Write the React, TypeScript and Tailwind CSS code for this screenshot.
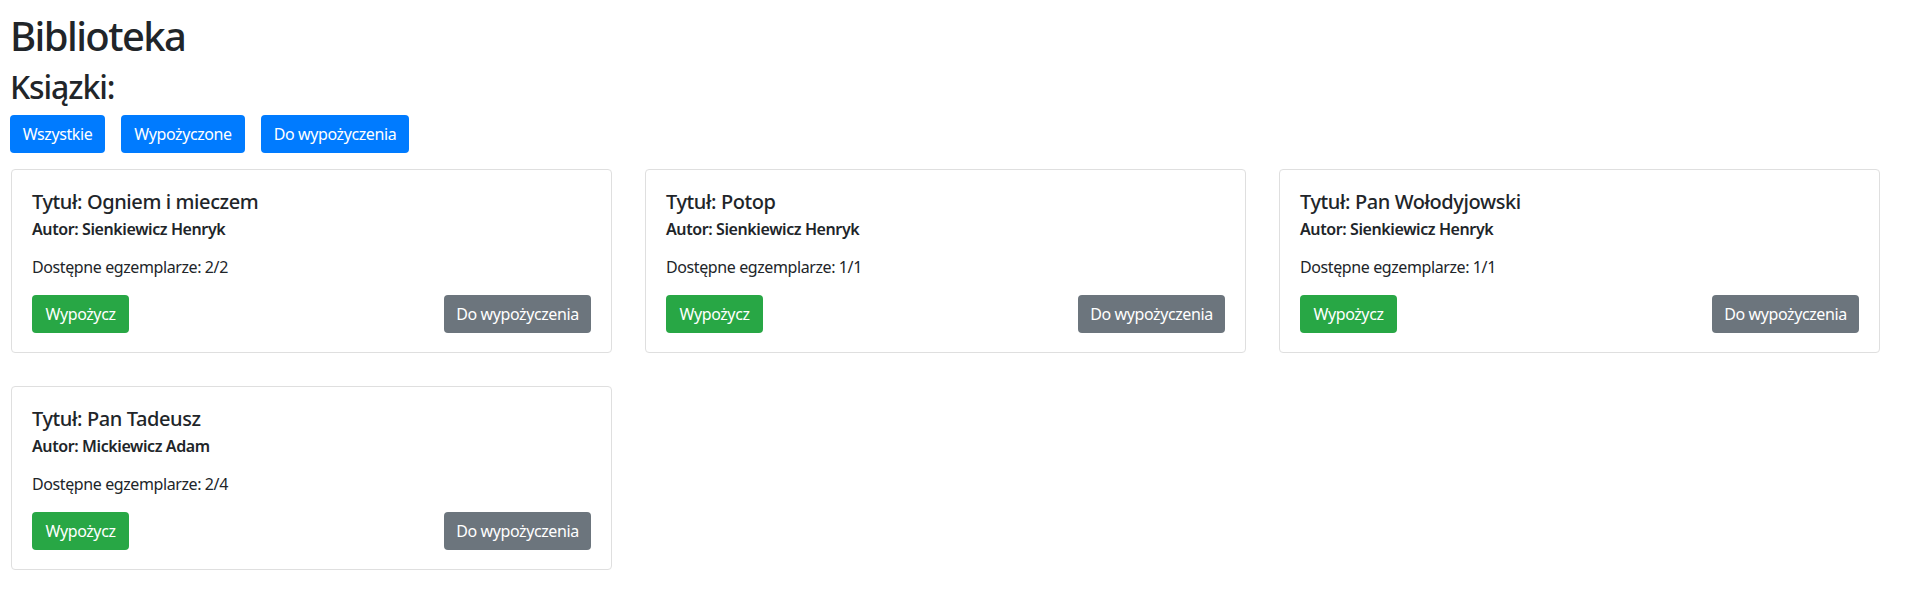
import React from "react";

type Book = { title: string; author: string; avail: string };

const books: Book[] = [
  { title: "Ogniem i mieczem", author: "Sienkiewicz Henryk", avail: "2/2" },
  { title: "Potop", author: "Sienkiewicz Henryk", avail: "1/1" },
  { title: "Pan Wołodyjowski", author: "Sienkiewicz Henryk", avail: "1/1" },
  { title: "Pan Tadeusz", author: "Mickiewicz Adam", avail: "2/4" },
];

function Card({ b }: { b: Book }) {
  return (
    <div className="h-[184px] rounded-[4px] border border-[#dfdfdf] bg-white px-[20px] pt-[20px]">
      <h5 className="mb-[6px] text-[20px] leading-[24px] font-medium">Tytuł: {b.title}</h5>
      <h6 className="mb-[16px] text-[16px] leading-[19px] font-semibold">Autor: {b.author}</h6>
      <p className="mb-[16px] text-[16px] leading-[24px]">Dostępne egzemplarze: {b.avail}</p>
      <div className="flex items-center justify-between">
        <button className="h-[38px] w-[97px] whitespace-nowrap rounded-[4px] bg-[#28a745] text-[16px] text-white">
          Wypożycz
        </button>
        <button className="h-[38px] w-[147px] whitespace-nowrap rounded-[4px] bg-[#6c757d] text-[16px] text-white">
          Do wypożyczenia
        </button>
      </div>
    </div>
  );
}

export default function App() {
  return (
    <div
      className="min-h-screen bg-white pl-[10px] pt-[12px] tracking-[-0.025em] text-[#212529]"
      style={{ fontFamily: '"Segoe UI", "Noto Sans", sans-serif' }}
    >
      <h1 className="mb-[8px] text-[40px] leading-[48px] font-medium tracking-[-0.04em]">Biblioteka</h1>
      <h2 className="mb-[9px] text-[32px] leading-[38px] font-medium tracking-[-0.035em]">Ksiązki:</h2>
      <div className="flex gap-[16px]">
        <button className="h-[38px] w-[95px] whitespace-nowrap rounded-[4px] bg-[#007bff] text-[16px] text-white">Wszystkie</button>
        <button className="h-[38px] w-[124px] whitespace-nowrap rounded-[4px] bg-[#007bff] text-[16px] text-white">Wypożyczone</button>
        <button className="h-[38px] w-[148px] whitespace-nowrap rounded-[4px] bg-[#007bff] text-[16px] text-white">Do wypożyczenia</button>
      </div>
      <div className="mt-[16px] ml-[1px] grid grid-cols-[repeat(3,601px)] gap-x-[33px] gap-y-[33px]">
        {books.map((b) => (
          <Card key={b.title} b={b} />
        ))}
      </div>
    </div>
  );
}
